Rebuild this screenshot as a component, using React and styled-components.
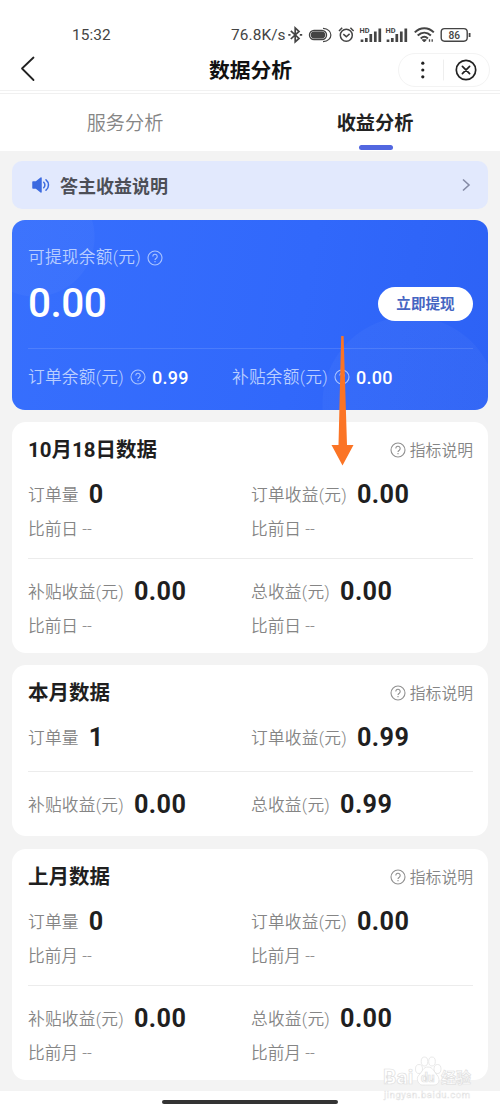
import React from "react";
import styled, { createGlobalStyle } from "styled-components";

const GlobalStyle = createGlobalStyle`
  * { box-sizing: border-box; }
  body {
    margin: 0;
    background: #fff;
    font-family: Roboto, "Noto Sans CJK SC", sans-serif;
    color: #1f1f1f;
  }
`;

const Screen = styled.div`
  position: relative;
  width: 500px;
  height: 1111px;
  display: flex;
  flex-direction: column;
  overflow: hidden;
  background: #fff;
  white-space: nowrap;
`;

const StatusBar = styled.div`
  height: 48px;
  padding: 22px 29px 0 72px;
  display: flex;
  justify-content: space-between;
  line-height: 26px;
  font-size: 15.4px;
  color: #444;
`;

const Clock = styled.span`
  letter-spacing: 0.1px;
`;

const StatusRight = styled.div`
  display: flex;
  align-items: center;
  height: 26px;

  svg { margin-top: -1px; }
`;

const Speed = styled.span`
  letter-spacing: 0.1px;
  width: 54px;
`;

const Header = styled.header`
  height: 43px;
  display: grid;
  grid-template-columns: 102px 1fr 102px;
  align-items: center;
  padding: 0 9px 0 20px;
  border-bottom: 1px solid #f1f1f1;

  svg { display: block; }
`;

const HeaderTitle = styled.h1`
  margin: 0 0 0 -10px;
  padding-top: 4px;
  text-align: center;
  font-size: 20.8px;
  font-weight: 700;
  line-height: 28px;
  color: #111;
`;

const Capsule = styled.div`
  height: 34px;
  width: 92px;
  margin: 2px 0 0 9px;
  border: 1px solid #f3f3f3;
  border-radius: 17px;
  display: flex;
  align-items: center;
  justify-content: flex-end;
  padding-right: 12px;
`;

const Tabs = styled.nav`
  height: 60px;
  border-top: 1px solid #f0f0f0;
  margin-top: 2px;
  display: grid;
  grid-template-columns: 1fr 1fr;
  flex: none;
`;

const Tab = styled.div`
  display: flex;
  flex-direction: column;
  align-items: center;
  justify-content: space-between;
  padding: 16px 0 3px;
  font-size: 19.2px;
  line-height: 28px;
  font-weight: ${(p) => (p.$active ? 700 : 350)};
  color: ${(p) => (p.$active ? "#222" : "#858585")};
`;

const TabMarker = styled.i`
  width: 34px;
  height: 5px;
  margin-left: 1px;
  border-radius: 3px;
  background: #5267e0;
`;

const Content = styled.main`
  height: 940px;
  margin-top: -2px;
  padding: 10px 12px 0;
  background: #f3f3f3;
  flex: none;
`;

const Notice = styled.div`
  height: 48px;
  border-radius: 10px;
  background: #e2e9fd;
  display: flex;
  align-items: center;
  padding: 0 17px 0 19px;
  font-size: 18px;
  font-weight: 700;
  color: #4d4f57;
`;

const NoticeText = styled.span`
  flex: 1;
  margin-left: 9px;
`;

const Balance = styled.section`
  position: relative;
  overflow: hidden;
  height: 190px;
  margin-top: 11px;
  padding: 26px 15px 0 16px;
  border-radius: 13px;
  color: #fff;
  background:
    radial-gradient(circle at 23px 17px, rgba(255, 255, 255, 0.03) 59px, transparent 60px),
    radial-gradient(circle at 398px 184px, rgba(255, 255, 255, 0.03) 87px, transparent 88px),
    linear-gradient(100deg, #376ffd, #3168fb 60%, #2d62f5);
`;

const BalanceLabel = styled.div`
  display: flex;
  align-items: center;
  font-size: 16.7px;
  font-weight: 350;
  line-height: 24px;
  letter-spacing: 0.25px;
  color: #b9ceff;

  svg { margin: -1px 0 0 6px; }
`;

const BalanceMain = styled.div`
  display: flex;
  justify-content: space-between;
  align-items: center;
  height: 46px;
  margin-top: 10px;
`;

const Amount = styled.span`
  font-size: 40.5px;
  font-weight: 500;
  line-height: 46px;
  letter-spacing: -0.5px;
`;

const Withdraw = styled.button`
  width: 95px;
  height: 34px;
  margin-top: 2px;
  border: 0;
  border-radius: 17px;
  background: #fff;
  color: #4565c2;
  font: 600 14.6px/32px Roboto, "Noto Sans CJK SC", sans-serif;
  padding: 0 0 1px;
`;

const BalanceFoot = styled.div`
  display: grid;
  grid-template-columns: 204px 1fr;
  margin-top: 22px;
  border-top: 1px solid rgba(255, 255, 255, 0.12);
  padding-top: 16px;
`;

const FootItem = styled.div`
  display: flex;
  align-items: center;
`;

const FootValue = styled.b`
  margin: 1px 0 0 6px;
  font-size: 18px;
  font-weight: 500;
  line-height: 24px;
  letter-spacing: 0.3px;
`;

const Card = styled.section`
  margin-top: ${(p) => p.$gap}px;
  padding: 13px 15px 16px 16px;
  border-radius: 14px;
  background: #fff;
`;

const CardHead = styled.div`
  display: flex;
  justify-content: space-between;
  align-items: center;
  height: 28px;
`;

const CardTitle = styled.h2`
  margin: 0;
  padding-top: 2px;
  font-size: 20.5px;
  font-weight: 700;
  line-height: 28px;
`;

const Explain = styled.span`
  display: flex;
  align-items: center;
  gap: 4px;
  padding-top: 1px;
  font-size: 15.8px;
  font-weight: 350;
  color: #858585;
`;

const StatRow = styled.div`
  display: grid;
  grid-template-columns: 223px 1fr;
  padding-top: ${(p) => (p.$divided ? 16 : 15)}px;
  margin-top: ${(p) => (p.$divided ? 18 : 0)}px;
  border-top: ${(p) => (p.$divided ? "1px solid #ececec" : "0")};
`;

const StatLine = styled.div`
  display: flex;
  align-items: center;
  height: 32px;
`;

const StatLabel = styled.span`
  font-size: 16.7px;
  font-weight: 350;
  letter-spacing: 0.25px;
  color: #858585;
`;

const StatValue = styled.b`
  margin-left: 10px;
  font-size: 25.2px;
  font-weight: 700;
  letter-spacing: 0.4px;
  color: #1f1f1f;
`;

const Compare = styled.div`
  margin-top: 6px;
  height: 24px;
  padding-top: 2px;
  line-height: 24px;
  font-size: 16.7px;
  font-weight: 350;
  color: #858585;
`;

const HomeBar = styled.div`
  width: 176px;
  height: 4px;
  margin: 9px auto 0;
  border-radius: 2px;
  background: #333;
  flex: none;
`;

const Arrow = styled.svg`
  position: absolute;
  left: 331px;
  top: 336px;
`;

const Watermark = styled.svg`
  position: absolute;
  left: 380px;
  top: 1054px;
`;

const Help = ({ color = "#909090" }) => (
  <svg width="16" height="16" viewBox="0 0 16 16" fill="none" stroke={color} strokeWidth="1.1">
    <circle cx="8" cy="8" r="7" />
    <path d="M5.800 6.400a2.200 2.200 0 1 1 3.500 1.800C8.300 8.800 8 9 8 10" />
    <path d="M8 11v1.300" />
  </svg>
);

const StatusIcons = () => (
  <svg width="186" height="22" viewBox="285 24 186 22" fill="none" stroke="#444" strokeWidth="1.4">
    <path d="M290.8 30.8l8.200 7.600-3.800 3.400V28l3.800 3.400-8.200 7.600" strokeWidth="1.7" />
    <path d="M288.300 34.900h2.200M299.800 34.900h2.400" strokeWidth="1.900" />
    <rect x="309.500" y="30.500" width="17" height="9" rx="4.500" />
    <rect x="311.500" y="32.300" width="13" height="5.400" rx="2.700" fill="#444" />
    <path d="M323 28.400c10.500.500 10.500 12.600 0 13.200" strokeWidth="1.200" />
    <circle cx="346.300" cy="35.300" r="6" strokeWidth="1.500" />
    <path d="M343.300 34.200l3 2.500 3.300-2.800M339 31l3.200-3.200M353.600 31l-3.200-3.200" strokeWidth="1.500" />
    {[360, 386].map((x) => (
      <g key={x}>
        <text x={x - 0.5} y="33" fontSize="7.4" fontWeight="700" fill="#444" stroke="none" fontFamily="Roboto, sans-serif">HD</text>
        <path
          d={`M${x + 2} 42v-2.500M${x + 6.300} 42v-4M${x + 10.800} 42v-8M${x + 15.300} 42v-10.500M${x + 19.800} 42v-13.500`}
          strokeWidth="2.700"
        />
      </g>
    ))}
    <path d="M414.800 32.400c5.500-5.500 13.500-5.500 19 0M417.700 35.500c4-3.800 9.200-3.800 13.200 0M420.700 38.400c2.300-2 5-2 7.200 0" strokeWidth="2" />
    <path d="M422.300 39.800l2 2.200 2-2.200z" fill="#444" strokeWidth="1" />
    <path d="M429.500 41.800v-2.600M432.200 41.800v-2.600" strokeWidth="1.300" />
    <rect x="441.200" y="28.600" width="26" height="12.600" rx="3.400" />
    <path d="M469.600 33v4" strokeWidth="1.800" />
    <text x="454.200" y="38.500" fontSize="10.200" textAnchor="middle" fontWeight="500" fill="#444" stroke="none" fontFamily="Roboto, sans-serif">86</text>
  </svg>
);

const cards = [
  {
    title: "10月18日数据",
    gap: 12,
    compare: "比前日 --",
    rows: [
      [["订单量", "0"], ["订单收益(元)", "0.00"]],
      [["补贴收益(元)", "0.00"], ["总收益(元)", "0.00"]],
    ],
  },
  {
    title: "本月数据",
    gap: 12,
    rows: [
      [["订单量", "1"], ["订单收益(元)", "0.99"]],
      [["补贴收益(元)", "0.00"], ["总收益(元)", "0.99"]],
    ],
  },
  {
    title: "上月数据",
    gap: 13,
    compare: "比前月 --",
    rows: [
      [["订单量", "0"], ["订单收益(元)", "0.00"]],
      [["补贴收益(元)", "0.00"], ["总收益(元)", "0.00"]],
    ],
  },
];

const DataCard = ({ title, gap, compare, rows }) => (
  <Card $gap={gap}>
    <CardHead>
      <CardTitle>{title}</CardTitle>
      <Explain>
        <Help />
        指标说明
      </Explain>
    </CardHead>
    {rows.map((row, i) => (
      <StatRow key={i} $divided={i > 0}>
        {row.map(([label, value]) => (
          <div key={label}>
            <StatLine>
              <StatLabel>{label}</StatLabel>
              <StatValue>{value}</StatValue>
            </StatLine>
            {compare && <Compare>{compare}</Compare>}
          </div>
        ))}
      </StatRow>
    ))}
  </Card>
);

export default function App() {
  return (
    <Screen>
      <GlobalStyle />
      <StatusBar>
        <Clock>15:32</Clock>
        <StatusRight>
          <Speed>76.8K/s</Speed>
          <StatusIcons />
        </StatusRight>
      </StatusBar>
      <Header>
        <svg width="16" height="26" viewBox="0 0 16 26" fill="none" stroke="#222" strokeWidth="1.8" strokeLinecap="round" strokeLinejoin="round">
          <path d="M13.500 1.500L2 12.500l11.500 11.500" />
        </svg>
        <HeaderTitle>数据分析</HeaderTitle>
        <Capsule>
          <svg width="56" height="24" viewBox="0 0 56 24" fill="none" stroke="#222" strokeWidth="1.700" strokeLinecap="round">
            <g fill="#222" stroke="none">
              <circle cx="1.800" cy="5.200" r="1.600" />
              <circle cx="1.800" cy="12" r="1.600" />
              <circle cx="1.800" cy="18.800" r="1.600" />
            </g>
            <path d="M22.500 2v20" stroke="#eee" strokeWidth="1" />
            <circle cx="45" cy="12" r="9.700" />
            <path d="M41.400 8.400l7.200 7.200M48.600 8.400l-7.200 7.200" />
          </svg>
        </Capsule>
      </Header>
      <Tabs>
        <Tab>服务分析</Tab>
        <Tab $active>
          收益分析
          <TabMarker />
        </Tab>
      </Tabs>
      <Content>
        <Notice>
          <svg width="20" height="18" viewBox="0 0 20 18" fill="none" stroke="#3c6ae0" strokeWidth="1.500" strokeLinecap="round">
            <path d="M2 6h3l5-4v14l-5-4H2z" fill="#3c6ae0" strokeLinejoin="round" />
            <path d="M12.700 6.200c1.600 1.500 1.600 4.100 0 5.600M15 3.800c3.300 2.600 3.300 7.800 0 10.400" />
          </svg>
          <NoticeText>答主收益说明</NoticeText>
          <svg width="10" height="14" viewBox="0 0 10 14" fill="none" stroke="#858ba5" strokeWidth="1.600">
            <path d="M2 1.500l6 5.500-6 5.500" />
          </svg>
        </Notice>
        <Balance>
          <BalanceLabel>
            可提现余额(元)
            <Help color="#aac4ff" />
          </BalanceLabel>
          <BalanceMain>
            <Amount>0.00</Amount>
            <Withdraw>立即提现</Withdraw>
          </BalanceMain>
          <BalanceFoot>
            <FootItem>
              <BalanceLabel>
                订单余额(元)
                <Help color="#aac4ff" />
              </BalanceLabel>
              <FootValue>0.99</FootValue>
            </FootItem>
            <FootItem>
              <BalanceLabel>
                补贴余额(元)
                <Help color="#aac4ff" />
              </BalanceLabel>
              <FootValue>0.00</FootValue>
            </FootItem>
          </BalanceFoot>
        </Balance>
        {cards.map((card) => (
          <DataCard key={card.title} {...card} />
        ))}
      </Content>
      <HomeBar />
      <Arrow width="24" height="130" viewBox="0 0 24 130">
        <path d="M10.200 0h2.400l3.400 109h6.500L11.500 129.500.500 109H7.500z" fill="#fb7425" />
      </Arrow>
      <Watermark width="104" height="50" viewBox="0 0 104 50" fill="#fff" stroke="#e0e0e0" strokeWidth="0.700" fontFamily="Roboto, 'Noto Sans CJK SC', sans-serif">
        <text x="3" y="30" fontSize="21" fontWeight="700">Bai</text>
        <ellipse cx="39" cy="15" rx="3.500" ry="4.500" />
        <ellipse cx="44.500" cy="7.500" rx="3.300" ry="4.500" />
        <ellipse cx="52" cy="7.500" rx="3.300" ry="4.500" />
        <ellipse cx="57.500" cy="15" rx="3.500" ry="4.500" />
        <path d="M48 13c5 0 6 5 9 8s3 10-3 10-9 0-12 0-7-6-3-10 4-8 9-8z" />
        <text x="41" y="28" fontSize="12" fontWeight="700">du</text>
        <text x="61" y="29" fontSize="15" fontWeight="700">经验</text>
        <text x="4" y="44" fontSize="9.500" strokeWidth="0.400" textLength="86">jingyan.baidu.com</text>
      </Watermark>
    </Screen>
  );
}
